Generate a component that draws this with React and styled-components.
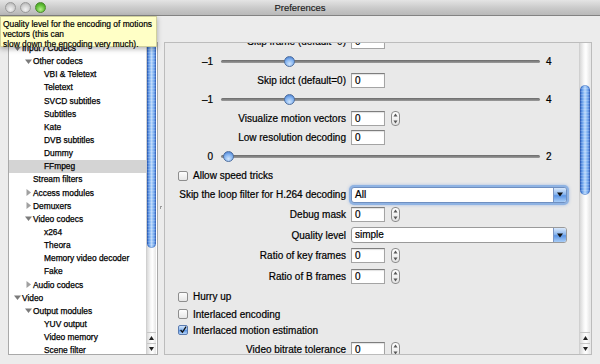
import React from "react";
import styled, { createGlobalStyle, css } from "styled-components";

const tree = [
  [0, "open", "Input / Codecs"],
  [1, "open", "Other codecs"],
  [2, null, "VBI & Teletext"],
  [2, null, "Teletext"],
  [2, null, "SVCD subtitles"],
  [2, null, "Subtitles"],
  [2, null, "Kate"],
  [2, null, "DVB subtitles"],
  [2, null, "Dummy"],
  [2, null, "FFmpeg", true],
  [1, null, "Stream filters"],
  [1, "closed", "Access modules"],
  [1, "closed", "Demuxers"],
  [1, "open", "Video codecs"],
  [2, null, "x264"],
  [2, null, "Theora"],
  [2, null, "Memory video decoder"],
  [2, null, "Fake"],
  [1, "closed", "Audio codecs"],
  [0, "open", "Video"],
  [1, "open", "Output modules"],
  [2, null, "YUV output"],
  [2, null, "Video memory"],
  [2, null, "Scene filter"],
];

const rows = [
  { type: "field", h: 19, label: "Skip frame (default=0)" },
  { type: "slider", h: 20, min: -1, max: 4, value: 0 },
  { type: "field", h: 18, label: "Skip idct (default=0)" },
  { type: "slider", h: 20, min: -1, max: 4, value: 0 },
  { type: "field", h: 18, label: "Visualize motion vectors", spin: true },
  { type: "field", h: 20, label: "Low resolution decoding" },
  { type: "slider", h: 19, min: 0, max: 2, value: 0 },
  { type: "check", h: 19, label: "Allow speed tricks" },
  { type: "combo", h: 19, label: "Skip the loop filter for H.264 decoding", value: "All", focus: true },
  { type: "field", h: 21, label: "Debug mask", spin: true },
  { type: "combo", h: 20, label: "Quality level", value: "simple" },
  { type: "field", h: 21, label: "Ratio of key frames", spin: true },
  { type: "field", h: 20, label: "Ratio of B frames", spin: true },
  { type: "check", h: 21, label: "Hurry up" },
  { type: "check", h: 14, label: "Interlaced encoding" },
  { type: "check", h: 18, label: "Interlaced motion estimation", checked: true },
  { type: "field", h: 20, label: "Video bitrate tolerance", spin: true },
];

const Twisty = ({ state }) => (
  <TwistyBox>
    {state === "open" && (
      <svg width="7" height="7" viewBox="0 0 7 7">
        <path d="M0 1.5 H7 L3.5 6 Z" fill="#7b7b7b" />
      </svg>
    )}
    {state === "closed" && (
      <svg width="7" height="7" viewBox="0 0 7 7">
        <path d="M1.5 0 V7 L6 3.5 Z" fill="#a0a0a0" />
      </svg>
    )}
  </TwistyBox>
);

const ScrollBar = ({ thumbTop, thumbHeight, width }) => (
  <Bar $w={width}>
    <Track>
      <Thumb $top={thumbTop} $h={thumbHeight} />
    </Track>
    <Arrow>
      <svg width="5" height="4" viewBox="0 0 5 4">
        <path d="M0 4 L2.5 0 L5 4 Z" fill="#222" />
      </svg>
    </Arrow>
    <Arrow>
      <svg width="5" height="4" viewBox="0 0 5 4">
        <path d="M0 0 L2.5 4 L5 0 Z" fill="#222" />
      </svg>
    </Arrow>
  </Bar>
);

const Spinner = () => (
  <Spin>
    <svg width="5" height="11" viewBox="0 0 5 11">
      <path d="M0.5 3.5 L2.5 0.5 L4.5 3.5 Z" fill="#555" />
      <path d="M0.5 7.5 L2.5 10.5 L4.5 7.5 Z" fill="#555" />
    </svg>
  </Spin>
);

const Slider = ({ min, max, value }) => {
  const frac = (value - min) / (max - min);
  return (
    <>
      <MinLabel>{min < 0 ? "\u20131" : min}</MinLabel>
      <Track2>
        <Groove />
        <Knob style={{ left: 1.5 + frac * 305 }} />
      </Track2>
      <MaxLabel>{max}</MaxLabel>
    </>
  );
};

const FormRow = ({ row }) => {
  if (row.type === "slider") {
    return (
      <Row $h={row.h}>
        <Slider {...row} />
      </Row>
    );
  }
  if (row.type === "check") {
    return (
      <Row $h={row.h}>
        <Check $checked={row.checked}>
          {row.checked && (
            <svg width="10" height="10" viewBox="0 0 10 10">
              <path d="M2 5 L4.3 7.8 L8.8 0.8" stroke="#111" strokeWidth="1.6" fill="none" />
            </svg>
          )}
        </Check>
        <CheckText>{row.label}</CheckText>
      </Row>
    );
  }
  return (
    <Row $h={row.h}>
      <Label>{row.label}</Label>
      {row.type === "combo" ? (
        <Combo $focus={row.focus}>
          <ComboText>{row.value}</ComboText>
          <ComboButton>
            <svg width="6" height="5" viewBox="0 0 6 5">
              <path d="M0 0.5 H6 L3 4.5 Z" fill="#111" />
            </svg>
          </ComboButton>
        </Combo>
      ) : (
        <>
          <NumberBox>0</NumberBox>
          {row.spin && <Spinner />}
        </>
      )}
    </Row>
  );
};

const App = () => {
  return (
    <Window>
      <GlobalStyle />
      <TitleBar>
        <Lights>
          <Light />
          <Light />
          <Light $green />
        </Lights>
        <Title>Preferences</Title>
      </TitleBar>

      <Body>
        <TreePanel>
          <TreeScroll>
            <TreeList>
              {tree.map(([level, state, text, selected], i) => (
                <TreeRow key={i} $level={level} $selected={selected}>
                  <Twisty state={state} />
                  <TreeText>{text}</TreeText>
                </TreeRow>
              ))}
            </TreeList>
          </TreeScroll>
          <ScrollBar thumbTop={0} thumbHeight={205} width={9} />
        </TreePanel>

        <Splitter>
          <Grip />
        </Splitter>

        <GroupBox>
          <FormScroll>
            <Form>
              {rows.map((row, i) => (
                <FormRow key={i} row={row} />
              ))}
            </Form>
          </FormScroll>
          <ScrollBar thumbTop={42} thumbHeight={110} width={10} />
        </GroupBox>
      </Body>

      <Tooltip>
        {"Quality level for the encoding of motions\nvectors (this can\nslow down the encoding very much)."}
      </Tooltip>
    </Window>
  );
};

export default App;

// Styled Components
const GlobalStyle = createGlobalStyle`
  html, body {
    margin: 0;
    padding: 0;
    background: #ececec;
  }
  body {
    font-family: "Liberation Sans", Arial, sans-serif;
    color: #000;
  }
`;

const Window = styled.div`
  position: relative;
  width: 600px;
  height: 364px;
  display: flex;
  flex-direction: column;
  background: #ececec;
  overflow: hidden;
`;

const TitleBar = styled.div`
  position: relative;
  height: 15px;
  flex: none;
  display: flex;
  align-items: center;
  justify-content: center;
  background: linear-gradient(#e4e4e4, #c9c9c9 55%, #b9b9b9);
  border-bottom: 1px solid #838383;
`;

const Lights = styled.div`
  position: absolute;
  left: 5px;
  top: 2px;
  display: flex;
  gap: 4px;
`;

const Light = styled.div`
  width: 11px;
  height: 11px;
  border-radius: 50%;
  box-sizing: border-box;
  border: 1px solid ${(p) => (p.$green ? "#4d8a2f" : "#9a9a9a")};
  background: ${(p) =>
    p.$green
      ? "radial-gradient(circle at 50% 70%, #b7f08c, #5fbf34 55%, #3f8f20)"
      : "radial-gradient(circle at 50% 70%, #f2f2f2, #cfcfcf 55%, #a9a9a9)"};
`;

const Title = styled.div`
  font-size: 9.5px;
  color: #1a1a1a;
  line-height: 15px;
  -webkit-text-stroke: 0.15px #1a1a1a;
`;

const Body = styled.div`
  flex: 1;
  display: flex;
  padding: 26px 8px 9px 8px;
  min-height: 0;
`;

const TreePanel = styled.div`
  width: 150px;
  flex: none;
  display: flex;
  box-sizing: border-box;
  border: 1px solid #a9a9a9;
  background: #fff;
`;

const TreeScroll = styled.div`
  flex: 1;
  overflow: hidden;
`;

const TreeList = styled.div`
  margin-top: -1.5px;
`;

const TreeRow = styled.div`
  height: 13.15px;
  display: flex;
  align-items: center;
  padding-left: ${(p) => 4 + p.$level * 11}px;
  background: ${(p) => (p.$selected ? "#d4d4d4" : "transparent")};
`;

const TwistyBox = styled.span`
  width: 9px;
  flex: none;
  display: flex;
  align-items: center;
  padding-left: 1px;
  box-sizing: border-box;
`;

const TreeText = styled.span`
  font-size: 8.4px;
  white-space: nowrap;
  -webkit-text-stroke: 0.25px #000;
`;

const Bar = styled.div`
  width: ${(p) => p.$w}px;
  flex: none;
  display: flex;
  flex-direction: column;
  margin-right: 1px;
  background: linear-gradient(to right, #d9d9d9, #f7f7f7 40%, #ffffff 60%, #e6e6e6);
  border-left: 1px solid #d0d0d0;
`;

const Track = styled.div`
  flex: 1;
  position: relative;
  border-radius: 5px 5px 0 0;
`;

const Thumb = styled.div`
  position: absolute;
  left: 0;
  right: 0;
  top: ${(p) => p.$top}px;
  height: ${(p) => p.$h}px;
  border-radius: 5px;
  background:
    repeating-linear-gradient(to bottom, rgba(255, 255, 255, 0.18) 0 1px, transparent 1px 3px),
    linear-gradient(to right, #2f66c8, #7aaef0 30%, #b9d7fb 50%, #86b7f3 70%, #3e72d0);
  box-shadow: inset 0 0 0 1px rgba(30, 70, 150, 0.35);
`;

const Arrow = styled.div`
  height: 10px;
  display: flex;
  align-items: center;
  justify-content: center;
  border-top: 1px solid #c6c6c6;
`;

const Splitter = styled.div`
  width: 6px;
  flex: none;
  display: flex;
  justify-content: center;
  padding-top: 164px;
`;

const Grip = styled.div`
  width: 2px;
  height: 3px;
  border-left: 1px solid #9a9a9a;
  border-top: 1px solid #9a9a9a;
  box-sizing: border-box;
`;

const GroupBox = styled.div`
  flex: 1;
  display: flex;
  box-sizing: border-box;
  border: 1px solid #bcbcbc;
  background: #e9e9e9;
  min-width: 0;
`;

const FormScroll = styled.div`
  flex: 1;
  overflow: hidden;
`;

const Form = styled.div`
  margin-top: -11px;
  padding-left: 12px;
`;

const Row = styled.div`
  height: ${(p) => p.$h}px;
  display: flex;
  align-items: center;
  font-size: 10px;
  white-space: nowrap;
  -webkit-text-stroke: 0.2px #000;
`;

const Label = styled.div`
  width: 169px;
  margin-right: 5px;
  text-align: right;
  flex: none;
`;

const NumberBox = styled.div`
  width: 34px;
  height: 15px;
  box-sizing: border-box;
  padding-left: 3px;
  line-height: 13px;
  background: #fff;
  border: 1px solid #a4a4a4;
  border-top-color: #7e7e7e;
  box-shadow: inset 0 1px 1px rgba(0, 0, 0, 0.12);
`;

const Spin = styled.div`
  margin-left: 6px;
  width: 9px;
  height: 15px;
  box-sizing: border-box;
  border: 1px solid #8c8c8c;
  border-radius: 4px;
  background: linear-gradient(#ffffff, #e4e4e4);
  display: flex;
  align-items: center;
  justify-content: center;
`;

const Combo = styled.div`
  width: 216px;
  height: 16px;
  box-sizing: border-box;
  display: flex;
  background: #fff;
  border: 1px solid #9a9a9a;
  border-radius: 3px;
  ${(p) =>
    p.$focus &&
    css`
      border-color: #6f8fc0;
      box-shadow: 0 0 0 2px #8fb3e3, 0 0 3px 2px rgba(90, 140, 220, 0.5);
    `}
`;

const ComboText = styled.div`
  flex: 1;
  padding-left: 3px;
  line-height: 14px;
`;

const ComboButton = styled.div`
  width: 12px;
  display: flex;
  align-items: center;
  justify-content: center;
  border-radius: 0 2px 2px 0;
  border-left: 1px solid #7c96c4;
  background: linear-gradient(#d9e8fb, #8db8ef 45%, #5d96e6 55%, #a8cdf7);
`;

const MinLabel = styled.div`
  width: 36px;
  text-align: right;
  margin-right: 8px;
`;

const Track2 = styled.div`
  position: relative;
  width: 319px;
  height: 11px;
  display: flex;
  align-items: center;
  margin-right: 6px;
`;

const Groove = styled.div`
  flex: 1;
  height: 3px;
  border-radius: 2px;
  background: linear-gradient(#6a6a6a, #9c9c9c);
`;

const Knob = styled.div`
  position: absolute;
  top: 0;
  width: 11px;
  height: 11px;
  box-sizing: border-box;
  border-radius: 50%;
  border: 1px solid #4f6f9f;
  background: radial-gradient(circle at 50% 75%, #cfe4fb, #7fb0ef 55%, #3b6fc4);
`;

const MaxLabel = styled.div``;

const Check = styled.div`
  width: 10px;
  height: 10px;
  margin-left: 1px;
  margin-right: 5px;
  box-sizing: border-box;
  border-radius: 2px;
  border: 1px solid ${(p) => (p.$checked ? "#5a7bb0" : "#8e8e8e")};
  background: ${(p) =>
    p.$checked
      ? "linear-gradient(#d3e5fb, #86b5ee 50%, #5b95e3 55%, #b9d6f8)"
      : "linear-gradient(#fdfdfd, #e6e6e6)"};
  display: flex;
  align-items: center;
  justify-content: center;
  overflow: visible;
`;

const CheckText = styled.div``;

const Tooltip = styled.div`
  position: absolute;
  left: 0;
  top: 16px;
  width: 157px;
  height: 31px;
  box-sizing: border-box;
  padding: 2px 0 0 2px;
  background: #ffffc6;
  border: 1px solid rgba(120, 120, 80, 0.35);
  box-shadow: 0 2px 5px rgba(0, 0, 0, 0.3);
  font-size: 8.4px;
  line-height: 10px;
  white-space: pre-line;
  color: #000;
  -webkit-text-stroke: 0.2px #000;
`;
